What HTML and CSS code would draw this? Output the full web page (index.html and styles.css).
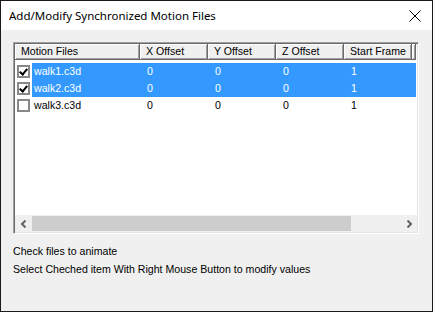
FILE: index.html
```html
<!DOCTYPE html>
<html lang="en">
<head>
    <meta charset="UTF-8">
    <title>Add/Modify Synchronized Motion Files</title>
    <link rel="stylesheet" href="styles.css">
</head>
<body>
    <div class="dialog">
        <div class="titlebar">
            <span class="title">Add/Modify Synchronized Motion Files</span>
            <svg class="close" width="12" height="12" viewBox="0 0 12 12">
                <path d="M0.5 0.5 L11.5 11.5 M11.5 0.5 L0.5 11.5" stroke="#000" stroke-width="1" fill="none"/>
            </svg>
        </div>

        <div class="content">
            <div class="listview">
                <div class="header">
                    <div class="hcell col-name">Motion Files</div>
                    <div class="hcell col-num">X Offset</div>
                    <div class="hcell col-num">Y Offset</div>
                    <div class="hcell col-num">Z Offset</div>
                    <div class="hcell col-num">Start Frame</div>
                    <div class="hcell col-rest"></div>
                </div>

                <div class="rows">
                    <div class="row selected">
                        <div class="check checked"></div>
                        <div class="cell col-file">walk1.c3d</div>
                        <div class="cell col-num">0</div>
                        <div class="cell col-num">0</div>
                        <div class="cell col-num">0</div>
                        <div class="cell col-num">1</div>
                    </div>
                    <div class="row selected">
                        <div class="check checked"></div>
                        <div class="cell col-file">walk2.c3d</div>
                        <div class="cell col-num">0</div>
                        <div class="cell col-num">0</div>
                        <div class="cell col-num">0</div>
                        <div class="cell col-num">1</div>
                    </div>
                    <div class="row">
                        <div class="check"></div>
                        <div class="cell col-file">walk3.c3d</div>
                        <div class="cell col-num">0</div>
                        <div class="cell col-num">0</div>
                        <div class="cell col-num">0</div>
                        <div class="cell col-num">1</div>
                    </div>
                </div>

                <div class="hscroll">
                    <div class="arrow">
                        <svg width="8" height="8" viewBox="0 0 8 8"><path d="M5.5 0.5 L2 4 L5.5 7.5" stroke="#606060" stroke-width="2" fill="none"/></svg>
                    </div>
                    <div class="track"><div class="thumb"></div></div>
                    <div class="arrow">
                        <svg width="8" height="8" viewBox="0 0 8 8"><path d="M2.5 0.5 L6 4 L2.5 7.5" stroke="#606060" stroke-width="2" fill="none"/></svg>
                    </div>
                </div>
            </div>

            <p class="hint">Check files to animate</p>
            <p class="hint">Select Cheched item With Right Mouse Button to modify values</p>
        </div>
    </div>
</body>
</html>
```

FILE: styles.css
```css
* {
    margin: 0;
    padding: 0;
    box-sizing: border-box;
}

body {
    background: #f0f0f0;
    font-family: 'Liberation Sans', Arial, sans-serif;
}

.dialog {
    width: 433px;
    height: 312px;
    border: 1px solid #1a1a1a;
    background: #f0f0f0;
    display: flex;
    flex-direction: column;
}

.titlebar {
    height: 29px;
    background: #fff;
    display: flex;
    align-items: center;
    justify-content: space-between;
    padding: 0 11px 0 8px;
}

.title {
    font-family: 'Noto Sans', sans-serif;
    font-size: 11.5px;
    color: #000;
}

.close {
    display: block;
}

.content {
    padding: 12px 0 0 12px;
}

/* list view */
.listview {
    width: 406px;
    height: 192px;
    border-top: 1px solid #a0a0a0;
    border-left: 1px solid #a0a0a0;
    border-right: 1px solid #fff;
    border-bottom: 1px solid #fff;
    box-shadow: inset 1px 1px 0 #696969, inset -1px -1px 0 #e3e3e3;
    background: #fff;
    padding: 1px;
    display: flex;
    flex-direction: column;
    font-size: 10.6px;
}

.header {
    display: flex;
    height: 16px;
}

.hcell {
    height: 16px;
    background: #f0f0f0;
    border-right: 1px solid #696969;
    border-bottom: 1px solid #696969;
    box-shadow: inset 1px 1px 0 #fff, inset -1px -1px 0 #a0a0a0;
    padding: 1px 0 0 6px;
    line-height: 13px;
    color: #000;
    white-space: nowrap;
    overflow: hidden;
}

.col-name { width: 125px; }
.col-num { width: 68px; }
.col-rest { width: 4px; padding: 0; }

.rows {
    flex: 1;
    padding-top: 3px;
}

.row {
    display: flex;
    align-items: center;
    height: 17px;
    color: #000;
}

.row.selected .cell {
    background: #3399ff;
    color: #fff;
}

.check {
    width: 13px;
    height: 13px;
    margin: 0 2px 0 2px;
    border: 2px solid #888;
    background: #fff;
    flex-shrink: 0;
}

.check.checked {
    position: relative;
}

.check.checked::after {
    content: "";
    position: absolute;
    left: 2px;
    top: 0;
    width: 3px;
    height: 6px;
    border-right: 2px solid #000;
    border-bottom: 2px solid #000;
    transform: rotate(40deg);
}

.cell {
    height: 17px;
    line-height: 17px;
    padding-left: 7px;
    white-space: nowrap;
}

.cell.col-file {
    width: 108px;
    padding-left: 2px;
}

.row .cell.col-num:last-child {
    width: 72px;
}

/* horizontal scrollbar */
.hscroll {
    display: flex;
    height: 17px;
    background: #f0f0f0;
}

.arrow {
    width: 17px;
    height: 17px;
    display: flex;
    align-items: center;
    justify-content: center;
}

.track {
    flex: 1;
    display: flex;
    align-items: center;
}

.thumb {
    width: 319px;
    height: 15px;
    background: #cdcdcd;
}

.hint {
    font-size: 10.6px;
    color: #000;
    margin-top: 11px;
    line-height: 12px;
}

.hint + .hint {
    margin-top: 6px;
}
```
